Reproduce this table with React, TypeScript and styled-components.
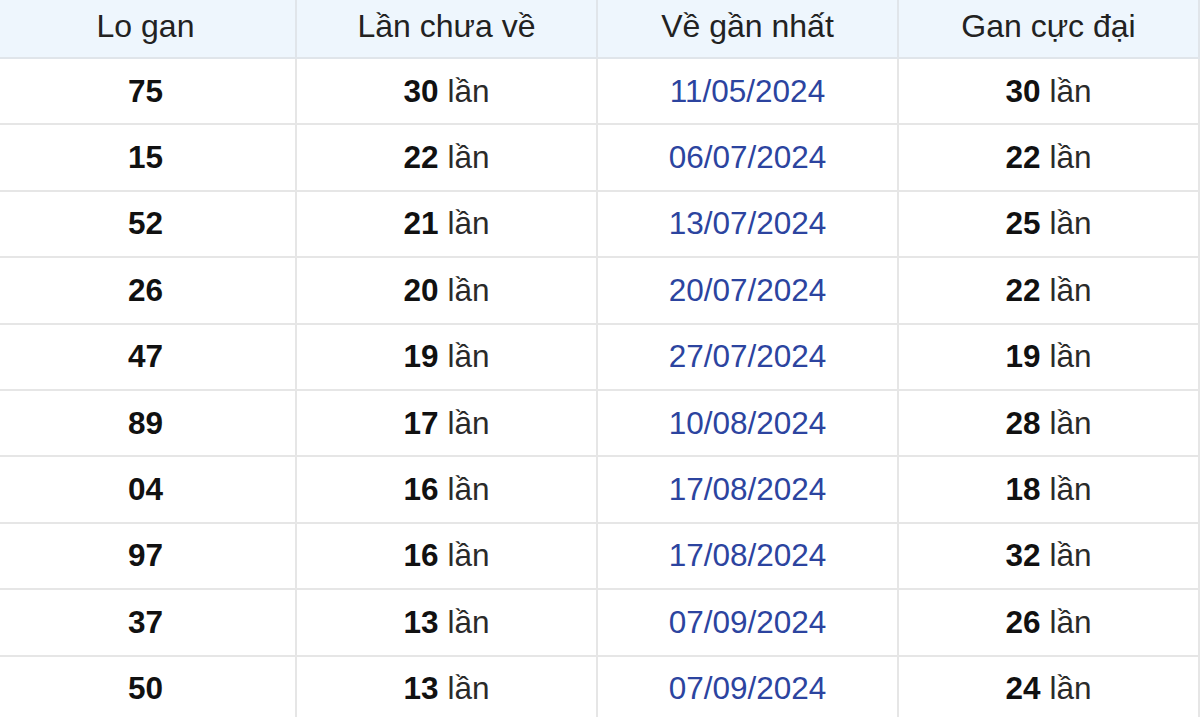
import styled, { createGlobalStyle } from 'styled-components';

const GlobalStyle = createGlobalStyle`
  html, body {
    margin: 0;
    padding: 0;
    background: #ffffff;
    overflow: hidden;
  }
`;

const Table = styled.table`
  width: 1206px;
  margin-left: -6px;
  border-collapse: collapse;
  table-layout: fixed;
  font-family: 'Liberation Sans', Arial, sans-serif;
  font-size: 31.5px;
  color: #2a2a2a;
`;

const HeadCell = styled.th`
  height: 52px;
  padding: 0 0 5px;
  background: #eef6fd;
  border: 2px solid #e0e5ea;
  border-top: none;
  font-size: 32px;
  font-weight: 400;
  color: #222222;
  text-align: center;
`;

const Cell = styled.td<{ $date?: boolean }>`
  height: 64.4px;
  padding: 0;
  border: 2px solid #e6e6e6;
  text-align: center;
  color: ${(props) => (props.$date ? '#2c449f' : '#2a2a2a')};
`;

const Num = styled.b`
  font-weight: 700;
  color: #111111;
`;

const rows = [
  ['75', '30', '11/05/2024', '30'],
  ['15', '22', '06/07/2024', '22'],
  ['52', '21', '13/07/2024', '25'],
  ['26', '20', '20/07/2024', '22'],
  ['47', '19', '27/07/2024', '19'],
  ['89', '17', '10/08/2024', '28'],
  ['04', '16', '17/08/2024', '18'],
  ['97', '16', '17/08/2024', '32'],
  ['37', '13', '07/09/2024', '26'],
  ['50', '13', '07/09/2024', '24'],
];

export default function App() {
  return (
    <>
      <GlobalStyle />
      <Table>
        <thead>
          <tr>
            <HeadCell>Lo gan</HeadCell>
            <HeadCell>Lần chưa về</HeadCell>
            <HeadCell>Về gần nhất</HeadCell>
            <HeadCell>Gan cực đại</HeadCell>
          </tr>
        </thead>
        <tbody>
          {rows.map(([lo, chua, date, max]) => (
            <tr key={lo + date}>
              <Cell>
                <Num>{lo}</Num>
              </Cell>
              <Cell>
                <Num>{chua}</Num> lần
              </Cell>
              <Cell $date>{date}</Cell>
              <Cell>
                <Num>{max}</Num> lần
              </Cell>
            </tr>
          ))}
        </tbody>
      </Table>
    </>
  );
}
